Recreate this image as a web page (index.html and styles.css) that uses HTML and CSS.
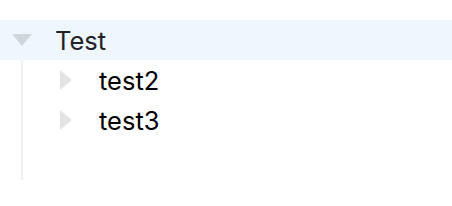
FILE: index.html
```html
<!DOCTYPE html>
<html>
<head>
<meta charset="utf-8">
<link rel="stylesheet" href="styles.css">
</head>
<body>
<div class="tree">
  <div class="row root">
    <span class="caret caret-down"></span>
    <span class="label label-root">Test</span>
  </div>
  <div class="children">
    <div class="row child">
      <span class="caret caret-right"></span>
      <span class="label">test2</span>
    </div>
    <div class="row child">
      <span class="caret caret-right"></span>
      <span class="label">test3</span>
    </div>
  </div>
</div>
</body>
</html>
```
FILE: styles.css
```css
html, body {
  margin: 0;
  padding: 0;
  background: #ffffff;
}
body {
  padding-top: 20px;
  font-family: Inter, "Liberation Sans", sans-serif;
}
.row {
  height: 40px;
  display: flex;
  align-items: center;
}
.root {
  background: #eff6fe;
  padding-left: 12px;
}
.caret {
  display: block;
  width: 0;
  height: 0;
  flex: none;
}
.caret-down {
  border-left: 10px solid transparent;
  border-right: 10px solid transparent;
  border-top: 12px solid #d1d6dd;
}
.caret-right {
  border-top: 10px solid transparent;
  border-bottom: 10px solid transparent;
  border-left: 12px solid #e3e3e3;
}
.label {
  font-size: 25.5px;
  color: #000;
  line-height: 1;
  position: relative;
  top: 1px;
}
.label-root {
  color: #1f2329;
  margin-left: 23px;
}
.children {
  margin-left: 21px;
  border-left: 2px solid #efefef;
  padding-left: 37px;
  padding-bottom: 40px;
}
.child .label {
  margin-left: 27px;
}
```
